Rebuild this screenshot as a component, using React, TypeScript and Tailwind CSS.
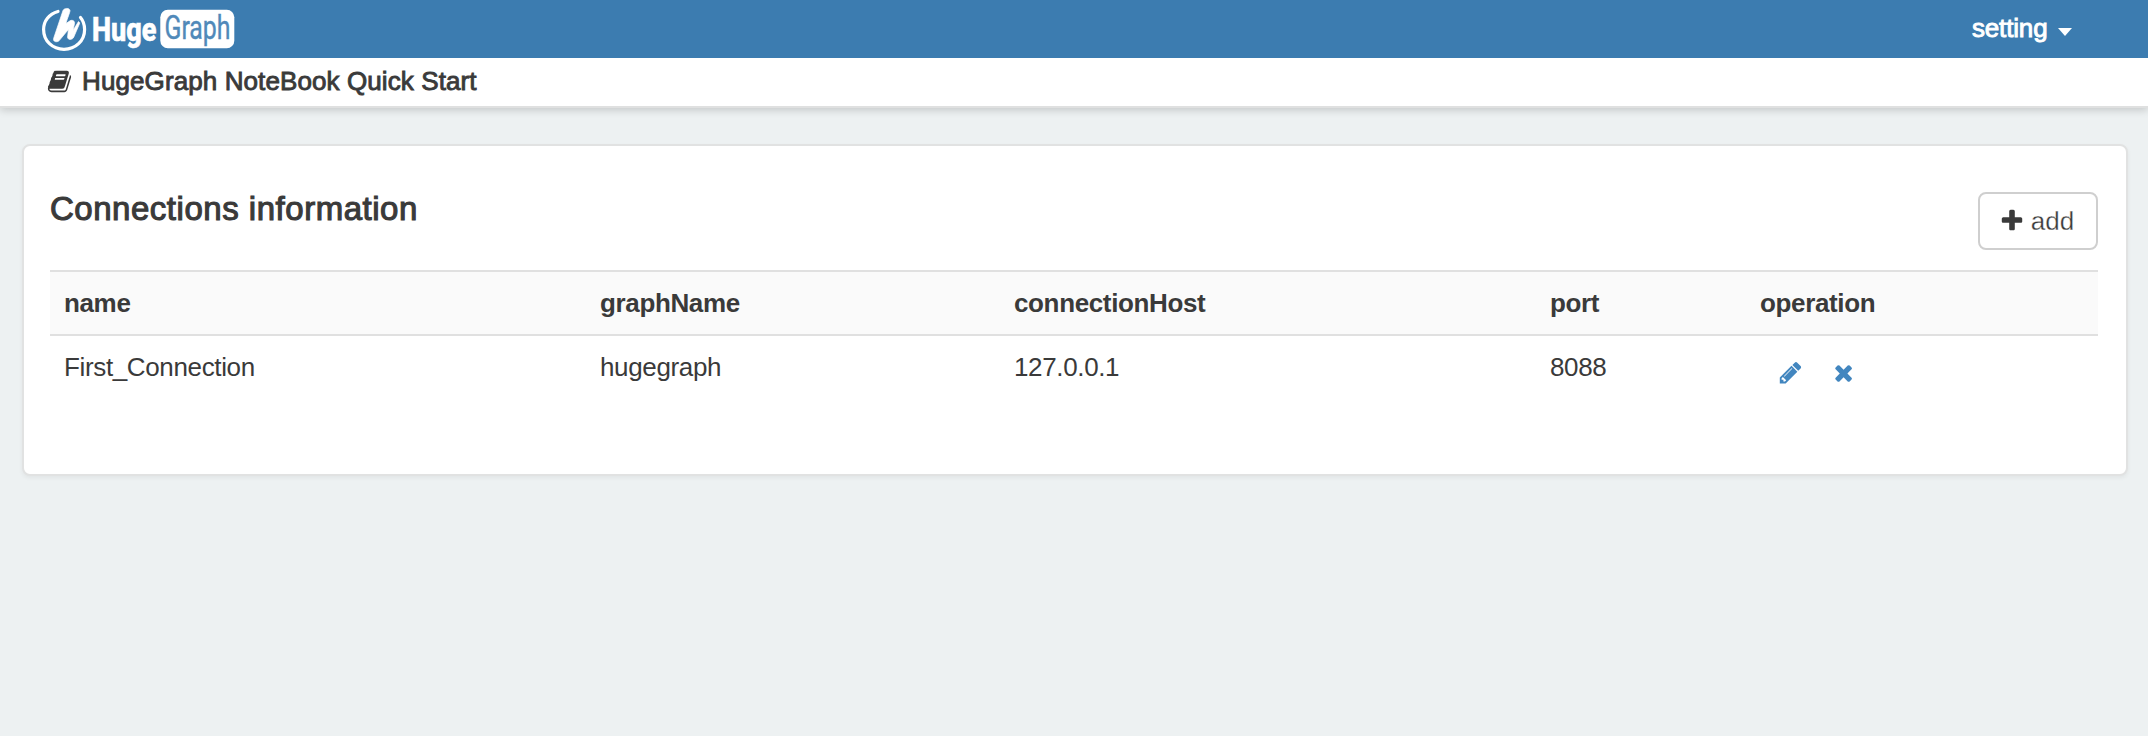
import React from 'react';

const ICONS = {
  book: 'M1703 478q40 57 18 129l-275 906q-19 64-76.5 107.5t-122.5 43.5h-923q-77 0-148.5-53.5t-99.5-131.5q-24-67-2-127 0-4 3-27t4-37q1-8-3-21.5t-3-19.5q2-11 8-21t16.5-23.5 16.5-23.5q23-38 45-91.5t30-91.5q3-10 .5-30t-.5-28q3-11 17-28t17-23q21-36 42-92t25-90q1-9-2.5-32t.5-28q4-13 22-30.5t22-22.5q19-26 42.5-84.5t27.5-96.5q1-8-3-25.5t-2-26.5q2-8 9-18t18-23 17-21q8-12 16.5-30.5t15-35 16-36 19.5-32 26.5-23.5 36-11.5 47.5 5.5l-1 3q38-9 51-9h761q74 0 114 56t18 130l-274 906q-36 119-71.5 153.5t-128.5 34.5h-869q-27 0-38 15-11 16-1 43 24 70 144 70h923q29 0 56-15.5t35-41.5l300-987q7-22 5-57 38 15 59 43zm-1064 2q-4 13 2 22.5t20 9.5h608q13 0 25.5-9.5t16.5-22.5l21-64q4-13-2-22.5t-20-9.5h-608q-13 0-25.5 9.5t-16.5 22.5zm-83 256q-4 13 2 22.5t20 9.5h608q13 0 25.5-9.5t16.5-22.5l21-64q4-13-2-22.5t-20-9.5h-608q-13 0-25.5 9.5t-16.5 22.5z',
  pencil: 'M491 1536l91-91-235-235-91 91v107h128v128h107zm523-928q0-22-22-22-10 0-17 7l-542 542q-7 7-7 17 0 22 22 22 10 0 17-7l542-542q7-7 7-17zm-54-192l416 416-832 832h-416v-416zm683 96q0 53-37 90l-166 166-416-416 166-165q36-38 90-38 53 0 91 38l235 234q37 39 37 91z',
  times: 'M1490 1322q0 40-28 68l-136 136q-28 28-68 28t-68-28l-294-294-294 294q-28 28-68 28t-68-28l-136-136q-28-28-28-68t28-68l294-294-294-294q-28-28-28-68t28-68l136-136q28-28 68-28t68 28l294 294 294-294q28-28 68-28t68 28l136 136q28 28 28 68t-28 68l-294 294 294 294q28 28 28 68z',
  plus: 'M1600 736v192q0 40-28 68t-68 28h-416v416q0 40-28 68t-68 28h-192q-40 0-68-28t-28-68v-416h-416q-40 0-68-28t-28-68v-192q0-40 28-68t68-28h416v-416q0-40 28-68t68-28h192q40 0 68 28t28 68v416h416q40 0 68 28t28 68z',
};

function Icon({ name, className }: { name: keyof typeof ICONS; className: string }) {
  return (
    <svg viewBox="0 0 1792 1792" className={className} fill="currentColor" aria-hidden="true">
      <path d={ICONS[name]} />
    </svg>
  );
}

function Logo() {
  return (
    <svg width="196" height="58" viewBox="40 0 196 58" className="block shrink-0 overflow-visible">
      <path
        d="M58 11.500C49 14 43.600 21 43.600 29.500C43.600 41 52.500 49.300 64 49.300C75.500 49.300 84.600 41 84.600 29.500C84.600 24.500 83 20.500 80.500 17.500"
        fill="none"
        stroke="#fff"
        strokeWidth="3.2"
        strokeLinecap="round"
      />
      <path
        d="M63 10.500C64 8 69.500 7.500 70 10.500C70.200 12 67 19 66 23.500L70 20.800C72.500 19.500 75 21 74.500 23.500L73 30.500L78.500 21.500L79.800 23L73.800 37C72.800 40 67.500 40.500 67.600 37L68.400 29.500L59 40.800C57 42.600 52.700 41.800 53.600 38.500Z"
        fill="#fff"
        stroke="#fff"
        strokeWidth="0.7"
        strokeLinejoin="round"
      />
      <text x="92" y="41" textLength="64.500" lengthAdjust="spacingAndGlyphs" fill="#fff" fontFamily="Roboto, sans-serif" fontWeight="800" fontSize="33" stroke="#fff" strokeWidth="0.6">
        Huge
      </text>
      <rect x="160.300" y="9.800" width="74" height="38.500" rx="7.500" fill="#fff" />
      <text x="164.500" y="38.500" textLength="66" lengthAdjust="spacingAndGlyphs" fill="#5089b9" fontFamily="Roboto, sans-serif" fontWeight="400" fontSize="32.500" stroke="#5089b9" strokeWidth="0.400">
        Graph
      </text>
    </svg>
  );
}

const columns = 'grid grid-cols-[536px_414px_536px_210px_352px]';
const headers = ['name', 'graphName', 'connectionHost', 'port', 'operation'];
const rows = [['First_Connection', 'hugegraph', '127.0.0.1', '8088']];

export default function App() {
  return (
    <div className="h-[736px] w-full overflow-hidden bg-[#edf1f2] font-['Liberation_Sans',Arial,sans-serif] text-[26px] text-[#3a3a3a]">
      <nav className="relative z-10 flex h-[58px] items-center justify-between bg-[#3c7cb0] pr-[76px] pl-10">
        <Logo />
        <button className="flex items-center gap-[10.5px] text-white">
          <span className="-mt-0.5 leading-[56px] tracking-[-0.15px] [-webkit-text-stroke:0.9px_currentColor]">setting</span>
          <svg width="14" height="8" viewBox="0 0 14 8" className="mt-[6px]">
            <path d="M0 0H14L7 8Z" fill="currentColor" />
          </svg>
        </button>
      </nav>

      <header className="flex h-[50px] items-center border-b-2 border-[#dfe0e0] bg-white pl-[47px] shadow-[0_2px_8px_rgba(0,0,0,0.18)]">
        <Icon name="book" className="-mt-px size-[25px]" />
        <h1 className="-mt-0.5 ml-[10px] leading-[48px] tracking-[0.1px] [-webkit-text-stroke:0.9px_currentColor]">
          HugeGraph NoteBook Quick Start
        </h1>
      </header>

      <main className="mt-9 mr-5 ml-[22px] h-[332px] rounded-lg border-2 border-[#e1e2e2] bg-white px-[26px] shadow-[0_2px_4px_rgba(0,0,0,0.05)]">
        <div className="flex h-[124px] items-start justify-between pr-[2px]">
          <h2 className="mt-[43px] text-[33px] leading-[40px] tracking-[0.52px] [-webkit-text-stroke:1.1px_currentColor]">
            Connections information
          </h2>
          <button className="mt-[46px] flex h-[58px] w-[120px] items-center justify-center rounded-lg border-2 border-[#cfcfcf] pr-[3px]">
            <Icon name="plus" className="size-[26px]" />
            <span className="ml-[6px] [-webkit-text-stroke:0.3px_#fff]">add</span>
          </button>
        </div>

        <div className="w-[2048px]">
          <div className={`${columns} h-[66px] border-y-2 border-[#e0e0e0] bg-[#fafafa]`}>
            {headers.map((h) => (
              <div key={h} className="pl-[14px] leading-[62px] font-bold tracking-[-0.36px]">
                {h}
              </div>
            ))}
          </div>
          {rows.map((row) => (
            <div key={row[0]} className={`${columns} h-[66px]`}>
              {row.map((cell) => (
                <div key={cell} className="pl-[14px] leading-[62px] tracking-[-0.36px]">
                  {cell}
                </div>
              ))}
              <div className="flex gap-[28px] pt-[24px] pl-[32px] text-[#4286bf]">
                <Icon name="pencil" className="size-[25.2px]" />
                <Icon name="times" className="size-[25.2px]" />
              </div>
            </div>
          ))}
        </div>
      </main>
    </div>
  );
}
